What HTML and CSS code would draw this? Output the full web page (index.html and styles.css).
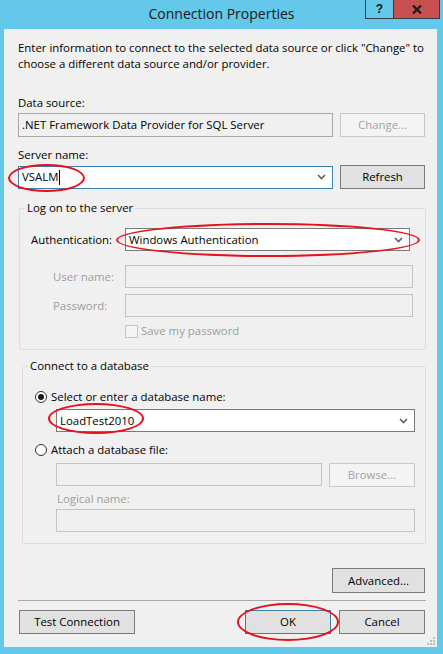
FILE: index.html
```html
<!DOCTYPE html>
<html>
<head>
<meta charset="utf-8">
<title>Connection Properties</title>
<link rel="stylesheet" href="styles.css">
</head>
<body>
<div class="window">
  <div class="titlebar">
    <div class="title">Connection Properties</div>
    <div class="caption-btns">
      <div class="cbtn help">?</div>
      <div class="cbtn close">
        <svg width="10" height="9" viewBox="0 0 10 9"><path d="M1 0.5 L9 8.5 M9 0.5 L1 8.5" stroke="#1a1a1a" stroke-width="2.2"/></svg>
      </div>
    </div>
  </div>

  <div class="client">
    <p class="desc">Enter information to connect to the selected data source or click "Change" to<br>choose a different data source and/or provider.</p>

    <div class="label lbl-ds">Data source:</div>
    <div class="row row-ds">
      <div class="field readonly ds-field">.NET Framework Data Provider for SQL Server</div>
      <div class="btn disabled btn-change">Change...</div>
    </div>

    <div class="label lbl-server">Server name:</div>
    <div class="row row-server">
      <div class="combo focused server-combo">
        <span class="combo-text">VSALM<span class="caret"></span></span>
        <svg class="chev" width="9" height="6" viewBox="0 0 9 6"><path d="M1 1 L4.5 4.5 L8 1" fill="none" stroke="#606060" stroke-width="1.6"/></svg>
        <span class="mark mark-server"></span>
      </div>
      <div class="btn btn-refresh">Refresh</div>
    </div>

    <fieldset class="group group-logon">
      <legend>Log on to the server</legend>
      <div class="g-row auth-row">
        <div class="g-label auth-label">Authentication:</div>
        <div class="combo auth-combo">
          <span class="combo-text">Windows Authentication</span>
          <svg class="chev" width="9" height="6" viewBox="0 0 9 6"><path d="M1 1 L4.5 4.5 L8 1" fill="none" stroke="#606060" stroke-width="1.6"/></svg>
          <span class="mark mark-auth"></span>
        </div>
      </div>
      <div class="g-row user-row">
        <div class="g-label dim">User name:</div>
        <div class="field disabled-field wide"></div>
      </div>
      <div class="g-row pass-row">
        <div class="g-label dim">Password:</div>
        <div class="field disabled-field wide"></div>
      </div>
      <div class="check-row">
        <span class="checkbox"></span>
        <span class="dim">Save my password</span>
      </div>
    </fieldset>

    <fieldset class="group group-db">
      <legend>Connect to a database</legend>
      <div class="radio-row r1">
        <span class="radio checked"><span class="dot"></span></span>
        <span>Select or enter a database name:</span>
      </div>
      <div class="combo db-combo">
        <span class="combo-text">LoadTest2010</span>
        <svg class="chev" width="9" height="6" viewBox="0 0 9 6"><path d="M1 1 L4.5 4.5 L8 1" fill="none" stroke="#606060" stroke-width="1.6"/></svg>
        <span class="mark mark-db"></span>
      </div>
      <div class="radio-row r2">
        <span class="radio"></span>
        <span>Attach a database file:</span>
      </div>
      <div class="file-row">
        <div class="field disabled-field file-field"></div>
        <div class="btn disabled btn-browse">Browse...</div>
      </div>
      <div class="dim logical-label">Logical name:</div>
      <div class="field disabled-field logical-field"></div>
    </fieldset>

    <div class="adv-row">
      <div class="btn btn-adv">Advanced...</div>
    </div>

    <div class="separator"></div>

    <div class="bottom-row">
      <div class="btn btn-test">Test Connection</div>
      <div class="bottom-right">
        <div class="btn default btn-ok">OK<span class="mark mark-ok"></span></div>
        <div class="btn btn-cancel">Cancel</div>
      </div>
    </div>

    <svg class="grip" width="10" height="10" viewBox="0 0 10 10">
      <g fill="#bdbdbd">
        <rect x="7" y="1" width="2" height="2"/>
        <rect x="4" y="4" width="2" height="2"/><rect x="7" y="4" width="2" height="2"/>
        <rect x="1" y="7" width="2" height="2"/><rect x="4" y="7" width="2" height="2"/><rect x="7" y="7" width="2" height="2"/>
      </g>
    </svg>
  </div>
</div>
</body>
</html>
```

FILE: styles.css
```css
html, body {
  margin: 0;
  padding: 0;
}

body {
  background: #63c8ea;
  font-family: "Open Sans", "Noto Sans", sans-serif;
  font-size: 11.4px;
  color: #000;
}

.window {
  width: 443px;
  height: 654px;
  display: flex;
  flex-direction: column;
  box-sizing: border-box;
}

/* Title bar */
.titlebar {
  height: 29px;
  display: grid;
  grid-template-columns: 1fr auto 1fr;
  flex: none;
}

.title {
  grid-column: 2;
  font-size: 14px;
  line-height: 27px;
  color: #1a1a1a;
  white-space: nowrap;
}

.caption-btns {
  grid-column: 3;
  justify-self: end;
  align-self: start;
  display: flex;
  margin-right: 3px;
  height: 19px;
}

.cbtn {
  box-sizing: border-box;
  height: 19px;
  border: 1px solid #3a3a3a;
  border-top: none;
  display: flex;
  align-items: center;
  justify-content: center;
}

.help {
  width: 29px;
  font-weight: bold;
  font-size: 12px;
  color: #111;
  font-family: "Liberation Sans", sans-serif;
}

.close {
  width: 47px;
  margin-left: -1px;
  background: #c75050;
}

/* Client area */
.client {
  flex: 1;
  margin: 0 6px 7px 4px;
  background: #f0f0f0;
  padding: 11px 12px 0 14px;
  position: relative;
  line-height: 16px;
}

.desc {
  margin: 0;
  color: #000;
  white-space: nowrap;
}

.label {
  color: #000;
}

.lbl-ds {
  margin-top: 23px;
}

.row {
  display: flex;
  align-items: center;
  gap: 7px;
}

.row-ds {
  margin-top: 2px;
}

.lbl-server {
  margin-top: 10px;
}

.row-server {
  margin-top: 2px;
}

.field {
  box-sizing: border-box;
  height: 23px;
  border: 1px solid #abadb3;
  background: #fff;
  padding: 0 3px;
  display: flex;
  align-items: center;
  white-space: nowrap;
}

.readonly {
  background: #f0f0f0;
  border-color: #a8a8a8;
}

.ds-field {
  width: 315px;
  height: 24px;
}

.disabled-field {
  background: #f0f0f0;
  border-color: #c4c4c4;
}

.btn {
  box-sizing: border-box;
  height: 24px;
  border: 1px solid #7a7a7a;
  background: #e1e1e1;
  display: flex;
  align-items: center;
  justify-content: center;
  white-space: nowrap;
  color: #000;
  position: relative;
}

.btn.disabled {
  border-color: #c8c8c8;
  background: #f4f4f4;
  color: #a3a3a3;
}

.btn.default {
  border-color: #3c7fb1;
}

.btn-change {
  width: 85px;
}

.btn-refresh {
  width: 85px;
}

.combo {
  box-sizing: border-box;
  height: 23px;
  border: 1px solid #7a7a7a;
  background: #fff;
  display: flex;
  align-items: center;
  justify-content: space-between;
  padding: 0 6px 0 3px;
  position: relative;
  white-space: nowrap;
}

.combo.focused {
  border-color: #3c7fb1;
}

.server-combo {
  width: 315px;
}

.combo-text {
  display: flex;
  align-items: center;
}

.caret {
  display: inline-block;
  width: 1px;
  height: 15px;
  background: #000;
  margin-left: 1px;
}

.chev {
  flex: none;
}

/* Red annotation ellipses */
.mark {
  position: absolute;
  border: 2px solid #e3121c;
  border-radius: 50%;
  box-sizing: border-box;
  pointer-events: none;
}

.mark-server {
  left: -11px;
  top: -3px;
  width: 77px;
  height: 28px;
}

.mark-auth {
  left: -10px;
  top: -6px;
  width: 304px;
  height: 34px;
}

.mark-db {
  left: -9px;
  top: -7px;
  width: 96px;
  height: 31px;
}

.mark-ok {
  left: -9px;
  top: -8px;
  width: 102px;
  height: 38px;
}

/* Group boxes */
.group {
  border: 1px solid #d5dfe5;
  border-radius: 3px;
  padding: 0;
  margin: 0;
  min-width: 0;
}

.group legend {
  margin-left: 5px;
  padding: 0 2px;
  line-height: 16px;
  color: #000;
}

.group-logon {
  margin: 11px 0 0 1px;
  width: 407px;
  box-sizing: border-box;
  padding: 0 0 10px 0;
}

.g-row {
  display: flex;
  align-items: center;
}

.g-label {
  width: 94px;
  flex: none;
}

.auth-row {
  margin-top: 12px;
  padding-left: 11px;
}

.auth-combo {
  width: 285px;
}

.user-row,
.pass-row {
  padding-left: 33px;
}

.user-row .g-label,
.pass-row .g-label {
  width: 72px;
}

.user-row {
  margin-top: 14px;
}

.pass-row {
  margin-top: 6px;
}

.wide {
  width: 288px;
}

.dim {
  color: #9d9d9d;
}

.check-row {
  display: flex;
  align-items: center;
  gap: 3px;
  margin-top: 6px;
  padding-left: 105px;
}

.checkbox {
  box-sizing: border-box;
  width: 13px;
  height: 13px;
  border: 1px solid #c4c4c4;
  background: #f4f4f4;
}

.group-db {
  margin: 8px 0 0 4px;
  width: 404px;
  box-sizing: border-box;
  padding: 0 0 11px 0;
}

.radio-row {
  display: flex;
  align-items: center;
  gap: 4px;
  padding-left: 12px;
}

.r1 {
  margin-top: 15px;
}

.r2 {
  margin-top: 10px;
}

.radio {
  box-sizing: border-box;
  width: 12px;
  height: 12px;
  border: 1px solid #333;
  border-radius: 50%;
  background: #fff;
  display: flex;
  align-items: center;
  justify-content: center;
}

.radio .dot {
  width: 6px;
  height: 6px;
  border-radius: 50%;
  background: #1a1a1a;
}

.db-combo {
  width: 359px;
  margin: 4px 0 0 33px;
}

.file-row {
  display: flex;
  gap: 7px;
  margin: 5px 0 0 33px;
}

.file-field {
  width: 266px;
}

.btn-browse {
  width: 86px;
}

.logical-label {
  margin: 4px 0 0 34px;
}

.logical-field {
  width: 359px;
  margin: 2px 0 0 33px;
}

.adv-row {
  display: flex;
  justify-content: flex-end;
  margin-top: 24px;
}

.btn-adv {
  width: 93px;
  height: 25px;
}

.separator {
  height: 1px;
  background: #a9a9a9;
  margin-top: 7px;
  width: 408px;
}

.bottom-row {
  display: flex;
  justify-content: space-between;
  margin: 9px 0 0 1px;
}

.bottom-right {
  display: flex;
  gap: 8px;
}

.btn-test {
  width: 116px;
}

.btn-ok,
.btn-cancel {
  width: 86px;
}

.grip {
  position: absolute;
  right: 1px;
  bottom: 1px;
}
```
